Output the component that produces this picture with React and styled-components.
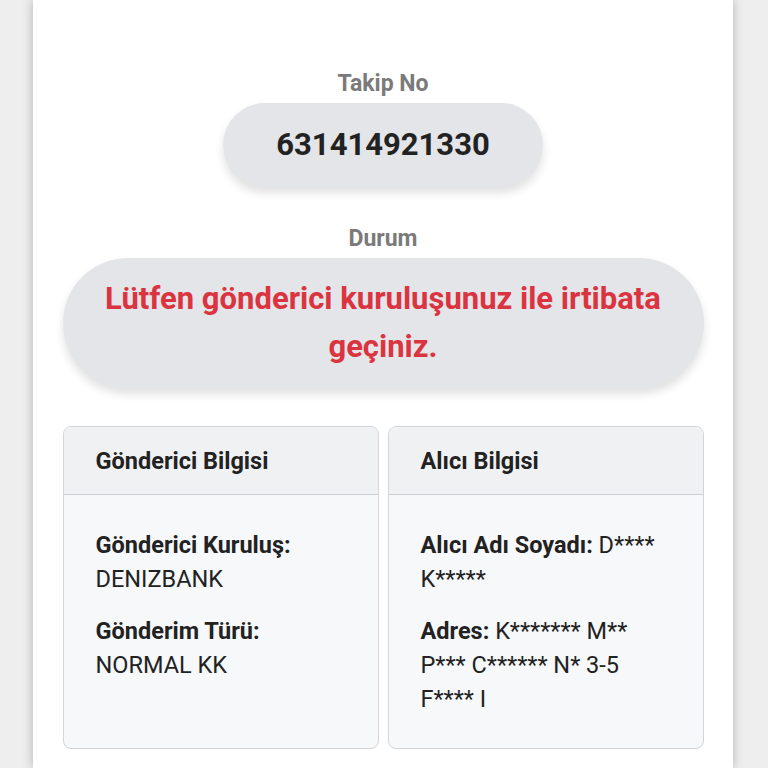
import React from 'react'
import styled, { createGlobalStyle } from 'styled-components'

const GlobalStyle = createGlobalStyle`
  html, body {
    margin: 0;
    padding: 0;
    background: #eeeeee;
    font-family: Roboto, "Noto Sans", sans-serif;
  }
`

const Page = styled.div`
  width: 768px;
  height: 768px;
  overflow: hidden;
  display: flex;
  justify-content: center;
  background: #eeeeee;
`

const Panel = styled.main`
  width: 700px;
  margin-left: -2px;
  background: #ffffff;
  box-shadow: 0 0 10px rgba(0, 0, 0, 0.25);
  padding: 68px 30px 0;
  box-sizing: border-box;
  display: flex;
  flex-direction: column;
  align-items: center;
`

const Label = styled.div`
  font-size: 23px;
  font-weight: 700;
  color: #7a7a7a;
  line-height: 32px;
  margin-bottom: 3px;
`

const Pill = styled.div`
  background: #e4e5e8;
  border-radius: 999px;
  box-shadow: 0 6px 10px rgba(0, 0, 0, 0.12);
  display: flex;
  align-items: center;
  justify-content: center;
  text-align: center;
  width: ${p => p.$wide ? '641px' : '320px'};
  height: ${p => p.$wide ? '130px' : '84px'};
  margin-bottom: ${p => p.$wide ? '38px' : '36px'};
  color: ${p => p.$alert ? '#db3441' : '#222222'};
  font-size: 31px;
  line-height: ${p => p.$alert ? '48px' : '40px'};
  font-weight: 700;
  box-sizing: border-box;
  padding: 0 30px;
`

const Cards = styled.div`
  display: grid;
  grid-template-columns: 1fr 1fr;
  gap: 9px;
  width: 641px;
`

const Card = styled.section`
  border: 1px solid #d4d5d8;
  border-radius: 8px;
  background: #f7f8fa;
  overflow: hidden;
  height: 323px;
  box-sizing: border-box;
`

const CardHeader = styled.header`
  height: 67px;
  background: #f0f1f3;
  border-bottom: 1px solid #cfd0d3;
  display: flex;
  align-items: center;
  padding: 0 32px;
  font-size: 23.5px;
  font-weight: 700;
  color: #222222;
`

const CardBody = styled.div`
  padding: 33px 32px 0;
  display: flex;
  flex-direction: column;
  gap: 18px;
`

const Field = styled.p`
  margin: 0;
  font-size: 23.5px;
  line-height: 34px;
  color: #222222;

  b {
    font-weight: 700;
  }
`

export default function App() {
  return (
    <>
      <GlobalStyle />
      <Page>
        <Panel>
          <Label>Takip No</Label>
          <Pill>631414921330</Pill>

          <Label>Durum</Label>
          <Pill $wide $alert>Lütfen gönderici kuruluşunuz ile irtibata geçiniz.</Pill>

          <Cards>
            <Card>
              <CardHeader>Gönderici Bilgisi</CardHeader>
              <CardBody>
                <Field><b>Gönderici Kuruluş:</b><br />DENIZBANK</Field>
                <Field><b>Gönderim Türü:</b><br />NORMAL KK</Field>
              </CardBody>
            </Card>
            <Card>
              <CardHeader>Alıcı Bilgisi</CardHeader>
              <CardBody>
                <Field><b>Alıcı Adı Soyadı:</b> D**** K*****</Field>
                <Field><b>Adres:</b> K******* M** P*** C****** N* 3-5 F**** I</Field>
              </CardBody>
            </Card>
          </Cards>
        </Panel>
      </Page>
    </>
  )
}
